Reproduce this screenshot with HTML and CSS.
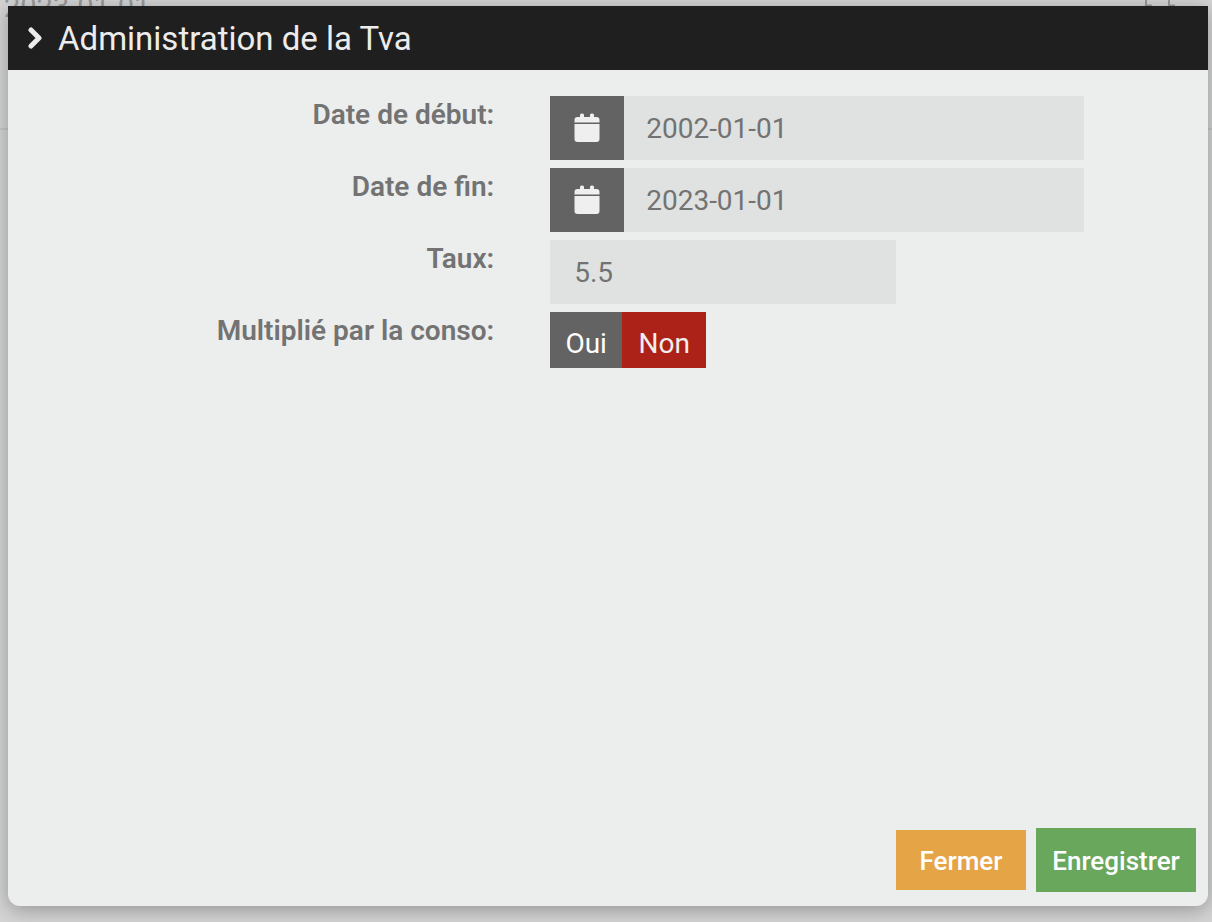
FILE: index.html
```
<!DOCTYPE html>
<html lang="fr">
<head>
<meta charset="UTF-8" />
<meta name="viewport" content="width=device-width, initial-scale=1" />
<title>Administration de la Tva</title>
<link rel="stylesheet" href="styles.css">
</head>
<body>

<div class="page-row">
  <span>2023-01-01</span>
  <svg class="row-icon" viewBox="0 0 34 36" aria-hidden="true">
    <path d="M2 0v5.500h6M25 0v5.500h6" />
  </svg>
</div>

<div class="overlay">
  <div class="modal" role="dialog" aria-labelledby="modalTitle">
    <header class="modal-header">
      <svg class="chevron" viewBox="0 0 14 22" aria-hidden="true">
        <path d="M3 3l8 8-8 8" />
      </svg>
      <h1 id="modalTitle">Administration de la Tva</h1>
    </header>

    <form id="tvaForm" class="modal-body">
      <div class="form-row">
        <label for="dateDebut">Date de début:</label>
        <div class="date-group">
          <span class="addon">
            <svg viewBox="0 0 26 30" aria-hidden="true">
              <path d="M6 4V2q0-1.500 1.500-1.500h1q1.500 0 1.500 1.500v2h6V2q0-1.500 1.500-1.500h1q1.500 0 1.500 1.500v2h2.500q3 0 3 3v2.500H.500V7q0-3 3-3zM.500 11H25.500v15q0 3-3 3h-19q-3 0-3-3z" />
            </svg>
          </span>
          <input type="text" id="dateDebut" value="2002-01-01" />
        </div>
      </div>
      <div class="form-row">
        <label for="dateFin">Date de fin:</label>
        <div class="date-group">
          <span class="addon">
            <svg viewBox="0 0 26 30" aria-hidden="true">
              <path d="M6 4V2q0-1.500 1.500-1.500h1q1.500 0 1.500 1.500v2h6V2q0-1.500 1.500-1.500h1q1.500 0 1.500 1.500v2h2.500q3 0 3 3v2.500H.500V7q0-3 3-3zM.500 11H25.500v15q0 3-3 3h-19q-3 0-3-3z" />
            </svg>
          </span>
          <input type="text" id="dateFin" value="2023-01-01" />
        </div>
      </div>
      <div class="form-row">
        <label for="taux">Taux:</label>
        <input type="text" id="taux" class="rate" value="5.5" />
      </div>
      <div class="form-row">
        <span class="row-label" id="multLabel">Multiplié par la conso:</span>
        <div class="toggle" role="radiogroup" aria-labelledby="multLabel">
          <input type="radio" name="mult" id="multOui" value="1" />
          <label for="multOui">Oui</label>
          <input type="radio" name="mult" id="multNon" value="0" checked />
          <label for="multNon">Non</label>
        </div>
      </div>
    </form>

    <footer class="modal-footer">
      <button type="button" class="btn btn-close">Fermer</button>
      <button type="submit" form="tvaForm" class="btn btn-save">Enregistrer</button>
    </footer>
  </div>
</div>

</body>
</html>
```
FILE: styles.css
```
* {
  box-sizing: border-box;
}
body {
  margin: 0;
  min-height: 100vh;
  overflow: hidden;
  background: #d4d4d4;
  font-family: Roboto, "Liberation Sans", sans-serif;
  font-size: 28px;
  color: #737373;
}
/* table row left visible behind the dialog */
.page-row {
  display: flex;
  justify-content: space-between;
  height: 130px;
  padding: 0 34px 0 4px;
  border-bottom: 2px solid #c6c6c6;
  font-size: 29px;
  line-height: 14px;
  color: #999;
}
.row-icon {
  width: 34px;
  height: 36px;
  fill: none;
  stroke: #999;
  stroke-width: 2;
}
.overlay {
  position: absolute;
  inset: 0;
  display: flex;
  padding: 6px 4px 16px 8px;
}
.modal {
  flex: 1;
  display: flex;
  flex-direction: column;
  background: #eceeed;
  border-radius: 0 0 12px 12px;
  box-shadow: 0 4px 20px rgba(0, 0, 0, 0.3);
}
.modal-header {
  display: flex;
  align-items: center;
  gap: 16px;
  height: 64px;
  padding: 0 20px;
  background: #1f1f1f;
  color: #ececec;
}
.modal-header h1 {
  margin: 0;
  font-size: 33px;
  font-weight: 400;
}
.chevron {
  width: 14px;
  height: 22px;
  fill: none;
  stroke: #ececec;
  stroke-width: 5;
  stroke-linecap: round;
  stroke-linejoin: round;
}
.modal-body {
  flex: 1;
  display: flex;
  flex-direction: column;
  gap: 8px;
  padding-top: 26px;
}
.form-row {
  display: grid;
  grid-template-columns: 17fr 23fr;
  column-gap: 56px;
}
.form-row > label,
.row-label {
  text-align: right;
  line-height: 38px;
  font-weight: 600;
}
.date-group {
  display: flex;
  max-width: 534px;
  height: 64px;
}
.addon {
  display: flex;
  align-items: center;
  justify-content: center;
  flex: 0 0 74px;
  background: #636363;
}
.addon svg {
  width: 26px;
  height: 30px;
  fill: #efefef;
}
input[type="text"] {
  flex: 1;
  min-width: 0;
  height: 64px;
  padding: 0 24px;
  border: 0;
  border-radius: 0;
  background: #e0e2e1;
  color: #737373;
  font: inherit;
}
.date-group input[type="text"] {
  padding: 0 22px;
}
input.rate {
  width: 100%;
  max-width: 346px;
}
.toggle {
  display: flex;
  height: 56px;
}
.toggle input {
  position: absolute;
  opacity: 0;
}
.toggle label {
  width: 72px;
  padding-top: 8px;
  background: #636363;
  color: #fff;
  line-height: 48px;
  text-align: center;
  cursor: pointer;
}
.toggle label:last-child {
  width: 84px;
}
.toggle input:checked + label {
  background: #ad2218;
  color: #efefef;
}
.modal-footer {
  display: flex;
  justify-content: flex-end;
  align-items: center;
  gap: 10px;
  padding: 14px 12px;
}
.btn {
  padding: 2px 0 0;
  border: 0;
  color: #fff;
  font-family: inherit;
  font-size: 26px;
  font-weight: 500;
  cursor: pointer;
}
.btn-close {
  width: 130px;
  height: 60px;
  background: #e5a445;
}
.btn-save {
  width: 160px;
  height: 64px;
  background: #69a75d;
}
```
